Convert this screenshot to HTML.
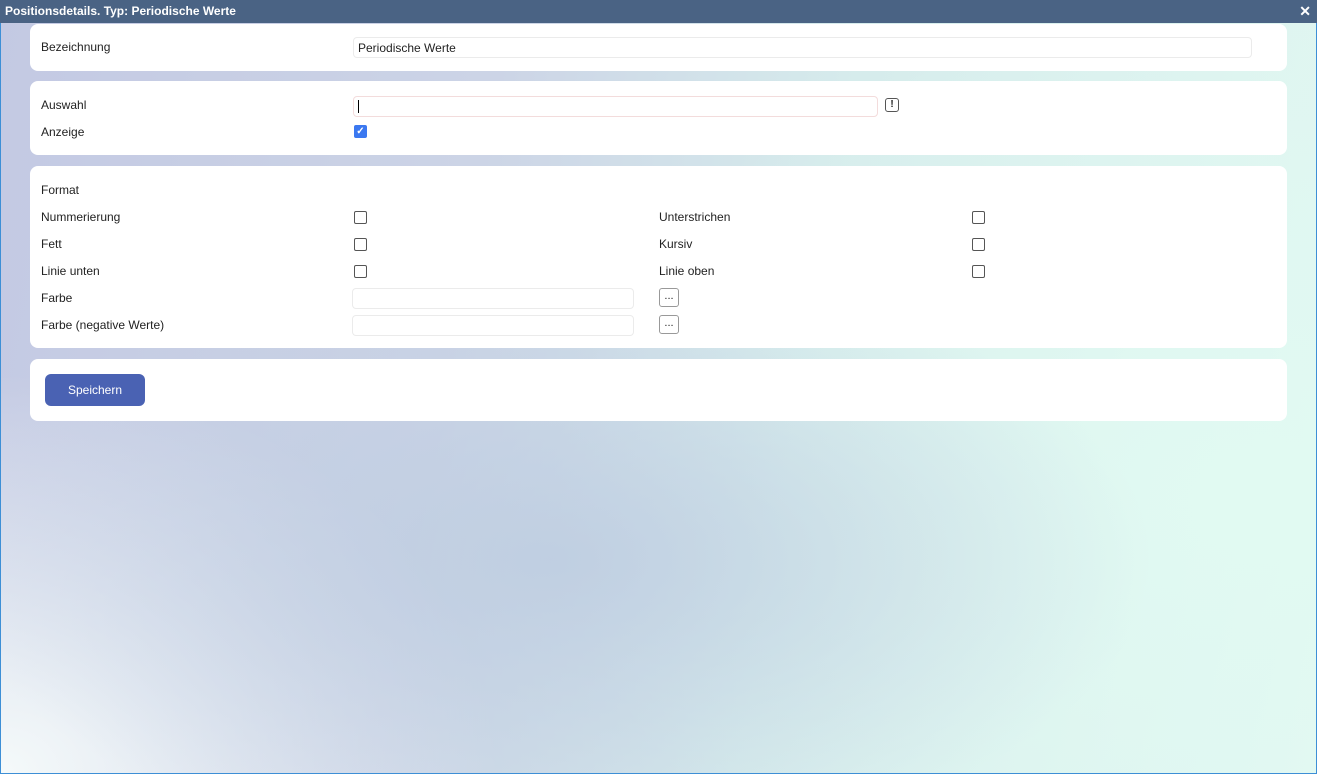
<!DOCTYPE html>
<html><head><style>
*{margin:0;padding:0;box-sizing:border-box}
body{width:1317px;height:774px;overflow:hidden;font-family:"Liberation Sans",sans-serif;font-size:12px;color:#222;position:relative;
background:
radial-gradient(ellipse 600px 300px at 550px 560px,rgba(190,205,225,0.9),rgba(190,205,225,0) 100%),
radial-gradient(ellipse 700px 500px at 1250px 500px,rgba(225,250,242,1),rgba(225,250,242,0) 100%),
radial-gradient(ellipse 500px 400px at 0px 774px,rgba(245,250,250,1),rgba(245,250,250,0) 100%),
linear-gradient(100deg,#c3c9e3 0%,#ccd4e6 35%,#d6ecec 60%,#e2f8f2 100%);
border:1px solid #3d8fd6;}
.title{position:absolute;left:-1px;top:-1px;width:1317px;height:23px;background:#4a6384;color:#fff;font-weight:bold;font-size:12px;line-height:23px;padding-left:5px}
.x{position:absolute;right:6px;top:0;font-size:14px}
.p{position:absolute;left:29px;width:1257px;background:#fff;border-radius:8px}
.l{position:absolute;left:11px}
.in{position:absolute;height:21px;border:1px solid #ebebeb;border-radius:4px;background:#fff}
.cb{position:absolute;width:13px;height:13px;border:1px solid #555;border-radius:2px;background:#fff}
.b{position:absolute;width:20px;height:19px;border:1px solid #999;border-radius:3px;text-align:center;line-height:14px;font-size:11px}
</style></head><body>
<div class="title">Positionsdetails. Typ: Periodische Werte<span class="x">✕</span></div>
<div class="p" style="top:23px;height:47px">
<div class="l" style="top:16px">Bezeichnung</div>
<div class="in" style="left:323px;top:13px;width:899px;padding:3px 4px;">Periodische Werte</div>
</div>
<div class="p" style="top:80px;height:74px">
<div class="l" style="top:17px">Auswahl</div>
<div class="in" style="left:323px;top:15px;width:525px;border:1px solid #f3dcdc"><div style="position:absolute;left:4px;top:3px;width:1px;height:13px;background:#000"></div></div>
<div style="position:absolute;left:855px;top:17px;width:14px;height:14px;border:1.5px solid #555;border-radius:3px;font-size:10px;font-weight:bold;text-align:center;line-height:11px">!</div>
<div class="l" style="top:44px">Anzeige</div>
<div class="cb" style="left:324px;top:44px;background:#3b78f0;border-color:#3b78f0;color:#fff;font-size:10px;line-height:11px;text-align:center;font-weight:bold">✓</div>
</div>
<div class="p" style="top:165px;height:182px">
<div class="l" style="top:17px">Format</div>
<div class="l" style="top:44px">Nummerierung</div><div class="cb" style="left:324px;top:45px"></div>
<div class="l" style="top:71px">Fett</div><div class="cb" style="left:324px;top:72px"></div>
<div class="l" style="top:98px">Linie unten</div><div class="cb" style="left:324px;top:99px"></div>
<div class="l" style="top:125px">Farbe</div><div class="in" style="left:322px;top:122px;width:282px"></div><div class="b" style="left:629px;top:122px">...</div>
<div class="l" style="top:152px">Farbe (negative Werte)</div><div class="in" style="left:322px;top:149px;width:282px"></div><div class="b" style="left:629px;top:149px">...</div>
<div class="l" style="left:629px;top:44px">Unterstrichen</div><div class="cb" style="left:942px;top:45px"></div>
<div class="l" style="left:629px;top:71px">Kursiv</div><div class="cb" style="left:942px;top:72px"></div>
<div class="l" style="left:629px;top:98px">Linie oben</div><div class="cb" style="left:942px;top:99px"></div>
</div>
<div class="p" style="top:358px;height:62px">
<div style="position:absolute;left:15px;top:15px;width:100px;height:32px;background:#4a62b3;border-radius:6px;color:#fff;text-align:center;line-height:32px">Speichern</div>
</div>
</body></html>
